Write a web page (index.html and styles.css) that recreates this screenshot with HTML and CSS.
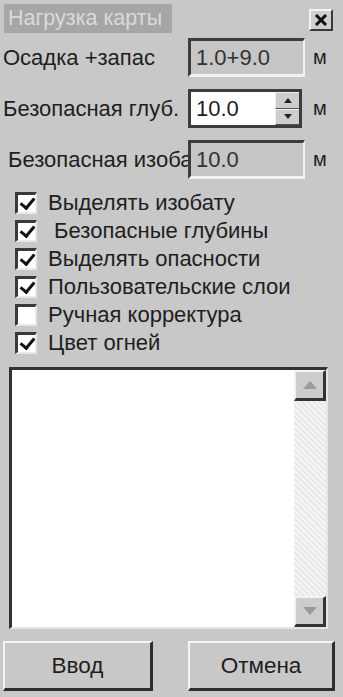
FILE: index.html
```html
<!DOCTYPE html>
<html lang="ru">
<head>
  <meta charset="UTF-8" />
  <title>Нагрузка карты</title>
  <link rel="stylesheet" href="styles.css">
</head>
<body>
  <div class="dialog">
    <div class="titlebar">
      <div class="caption">Нагрузка карты</div>
      <div class="close">
        <svg width="14" height="12" viewBox="0 0 14 12"><path d="M2 1 L12 11 M12 1 L2 11" stroke="#111" stroke-width="3"/></svg>
      </div>
    </div>

    <div class="fields">
      <div class="label">Осадка +запас</div>
      <div class="field disabled">1.0+9.0</div>
      <div class="unit">м</div>

      <div class="label">Безопасная глуб.</div>
      <div class="field spin">
        <span>10.0</span>
        <div class="spinbtns">
          <div class="spinbtn"><svg width="8" height="5" viewBox="0 0 8 5"><path d="M0 5 L4 0 L8 5Z" fill="#222"/></svg></div>
          <div class="spinbtn"><svg width="8" height="5" viewBox="0 0 8 5"><path d="M0 0 L4 5 L8 0Z" fill="#222"/></svg></div>
        </div>
      </div>
      <div class="unit">м</div>

      <div class="label clip">Безопасная изоба</div>
      <div class="field disabled">10.0</div>
      <div class="unit">м</div>
    </div>

    <div class="checks">
      <div class="check"><span class="box on"></span>Выделять изобату</div>
      <div class="check"><span class="box on"></span>&nbsp;Безопасные глубины</div>
      <div class="check"><span class="box on"></span>Выделять опасности</div>
      <div class="check"><span class="box on"></span>Пользовательские слои</div>
      <div class="check"><span class="box"></span>Ручная корректура</div>
      <div class="check"><span class="box on"></span>Цвет огней</div>
    </div>

    <div class="listbox">
      <div class="listarea"></div>
      <div class="scrollbar">
        <div class="sbtn"><svg width="14" height="8" viewBox="0 0 14 8"><path d="M0 8 L7 0 L14 8Z" fill="#9a9a9a"/></svg></div>
        <div class="track"></div>
        <div class="sbtn"><svg width="14" height="8" viewBox="0 0 14 8"><path d="M0 0 L7 8 L14 0Z" fill="#9a9a9a"/></svg></div>
      </div>
    </div>

    <div class="buttons">
      <button class="btn">Ввод</button>
      <button class="btn">Отмена</button>
    </div>
  </div>
</body>
</html>
```

FILE: styles.css
```css
body {
  margin: 0;
  background: #c8c8c8;
  font-family: 'Liberation Sans', Arial, sans-serif;
  color: #1e1e1e;
}

.dialog {
  width: 343px;
  height: 697px;
  box-sizing: border-box;
  display: flex;
  flex-direction: column;
}

.titlebar {
  display: flex;
  justify-content: space-between;
  align-items: flex-start;
  padding: 4px 10px 0 4px;
  height: 33px;
  box-sizing: border-box;
}

.caption {
  width: 164px;
  height: 29px;
  padding-left: 4px;
  background: #a6a6a6;
  color: #dadada;
  font-size: 21.5px;
  line-height: 29px;
  white-space: nowrap;
  overflow: hidden;
}

.close {
  width: 24px;
  height: 22px;
  margin-top: 5px;
  box-sizing: border-box;
  background: #cfcfcf;
  border-top: 2px solid #f4f4f4;
  border-left: 2px solid #f4f4f4;
  border-right: 2px solid #3a3a3a;
  border-bottom: 2px solid #3a3a3a;
  display: flex;
  align-items: center;
  justify-content: center;
}

.fields {
  display: grid;
  grid-template-columns: 185px 117px auto;
  grid-auto-rows: 39px;
  row-gap: 12px;
  padding: 5px 0 0 3px;
  align-items: center;
}

.label {
  font-size: 22px;
  white-space: nowrap;
}

.label.clip {
  overflow: hidden;
  padding-left: 5px;
}

.field {
  height: 39px;
  box-sizing: border-box;
  border-top: 3px solid #3c3c3c;
  border-left: 3px solid #3c3c3c;
  border-right: 2px solid #f2f2f2;
  border-bottom: 3px solid #f2f2f2;
  background: #fff;
  font-size: 22px;
  line-height: 33px;
  padding-left: 5px;
}

.field.disabled {
  background: #c6c6c6;
  color: #333;
}

.field.spin {
  display: flex;
  justify-content: space-between;
  border-right: 3px solid #3c3c3c;
  border-bottom: 3px solid #3c3c3c;
  border-top: 3px solid #3c3c3c;
  width: 114px;
}

.spinbtns {
  display: flex;
  flex-direction: column;
  width: 24px;
}

.spinbtn {
  flex: 1;
  background: #cdcdcd;
  border-top: 1px solid #f0f0f0;
  border-left: 1px solid #f0f0f0;
  border-bottom: 1px solid #555;
  display: flex;
  align-items: center;
  justify-content: center;
}

.unit {
  font-size: 20px;
  padding-left: 8px;
}

.checks {
  display: flex;
  flex-direction: column;
  padding: 10px 0 0 15px;
}

.check {
  height: 28px;
  display: flex;
  align-items: center;
  font-size: 22px;
  white-space: nowrap;
}

.box {
  width: 22px;
  height: 22px;
  box-sizing: border-box;
  margin-right: 11px;
  background: #fff;
  border-top: 3px solid #3a3a3a;
  border-left: 3px solid #3a3a3a;
  border-right: 2px solid #e8e8e8;
  border-bottom: 2px solid #e8e8e8;
  position: relative;
}

.box.on::after {
  content: '';
  position: absolute;
  left: 5px;
  top: 0;
  width: 6px;
  height: 11px;
  border-right: 3px solid #111;
  border-bottom: 3px solid #111;
  transform: rotate(40deg);
}

.listbox {
  margin: 10px 15px 0 9px;
  height: 262px;
  box-sizing: border-box;
  border-top: 3px solid #333;
  border-left: 3px solid #333;
  border-right: 2px solid #e6e6e6;
  border-bottom: 2px solid #e6e6e6;
  background: #fff;
  display: flex;
}

.listarea {
  flex: 1;
}

.scrollbar {
  width: 32px;
  display: flex;
  flex-direction: column;
  background: repeating-linear-gradient(45deg, #e9e9e9 0 2px, #f5f5f5 2px 4px);
}

.sbtn {
  height: 31px;
  box-sizing: border-box;
  background: #cdcdcd;
  border-top: 2px solid #f2f2f2;
  border-left: 2px solid #f2f2f2;
  border-right: 3px solid #333;
  border-bottom: 3px solid #333;
  display: flex;
  align-items: center;
  justify-content: center;
}

.track {
  flex: 1;
}

.buttons {
  display: flex;
  justify-content: space-between;
  padding: 12px 8px 0 3px;
}

.btn {
  width: 150px;
  height: 50px;
  box-sizing: border-box;
  background: #c8c8c8;
  border-top: 2px solid #f4f4f4;
  border-left: 2px solid #f4f4f4;
  border-right: 3px solid #2e2e2e;
  border-bottom: 3px solid #2e2e2e;
  font-family: 'Liberation Sans', Arial, sans-serif;
  font-size: 22.5px;
  color: #1e1e1e;
}

.btn + .btn {
  width: 147px;
}
```
